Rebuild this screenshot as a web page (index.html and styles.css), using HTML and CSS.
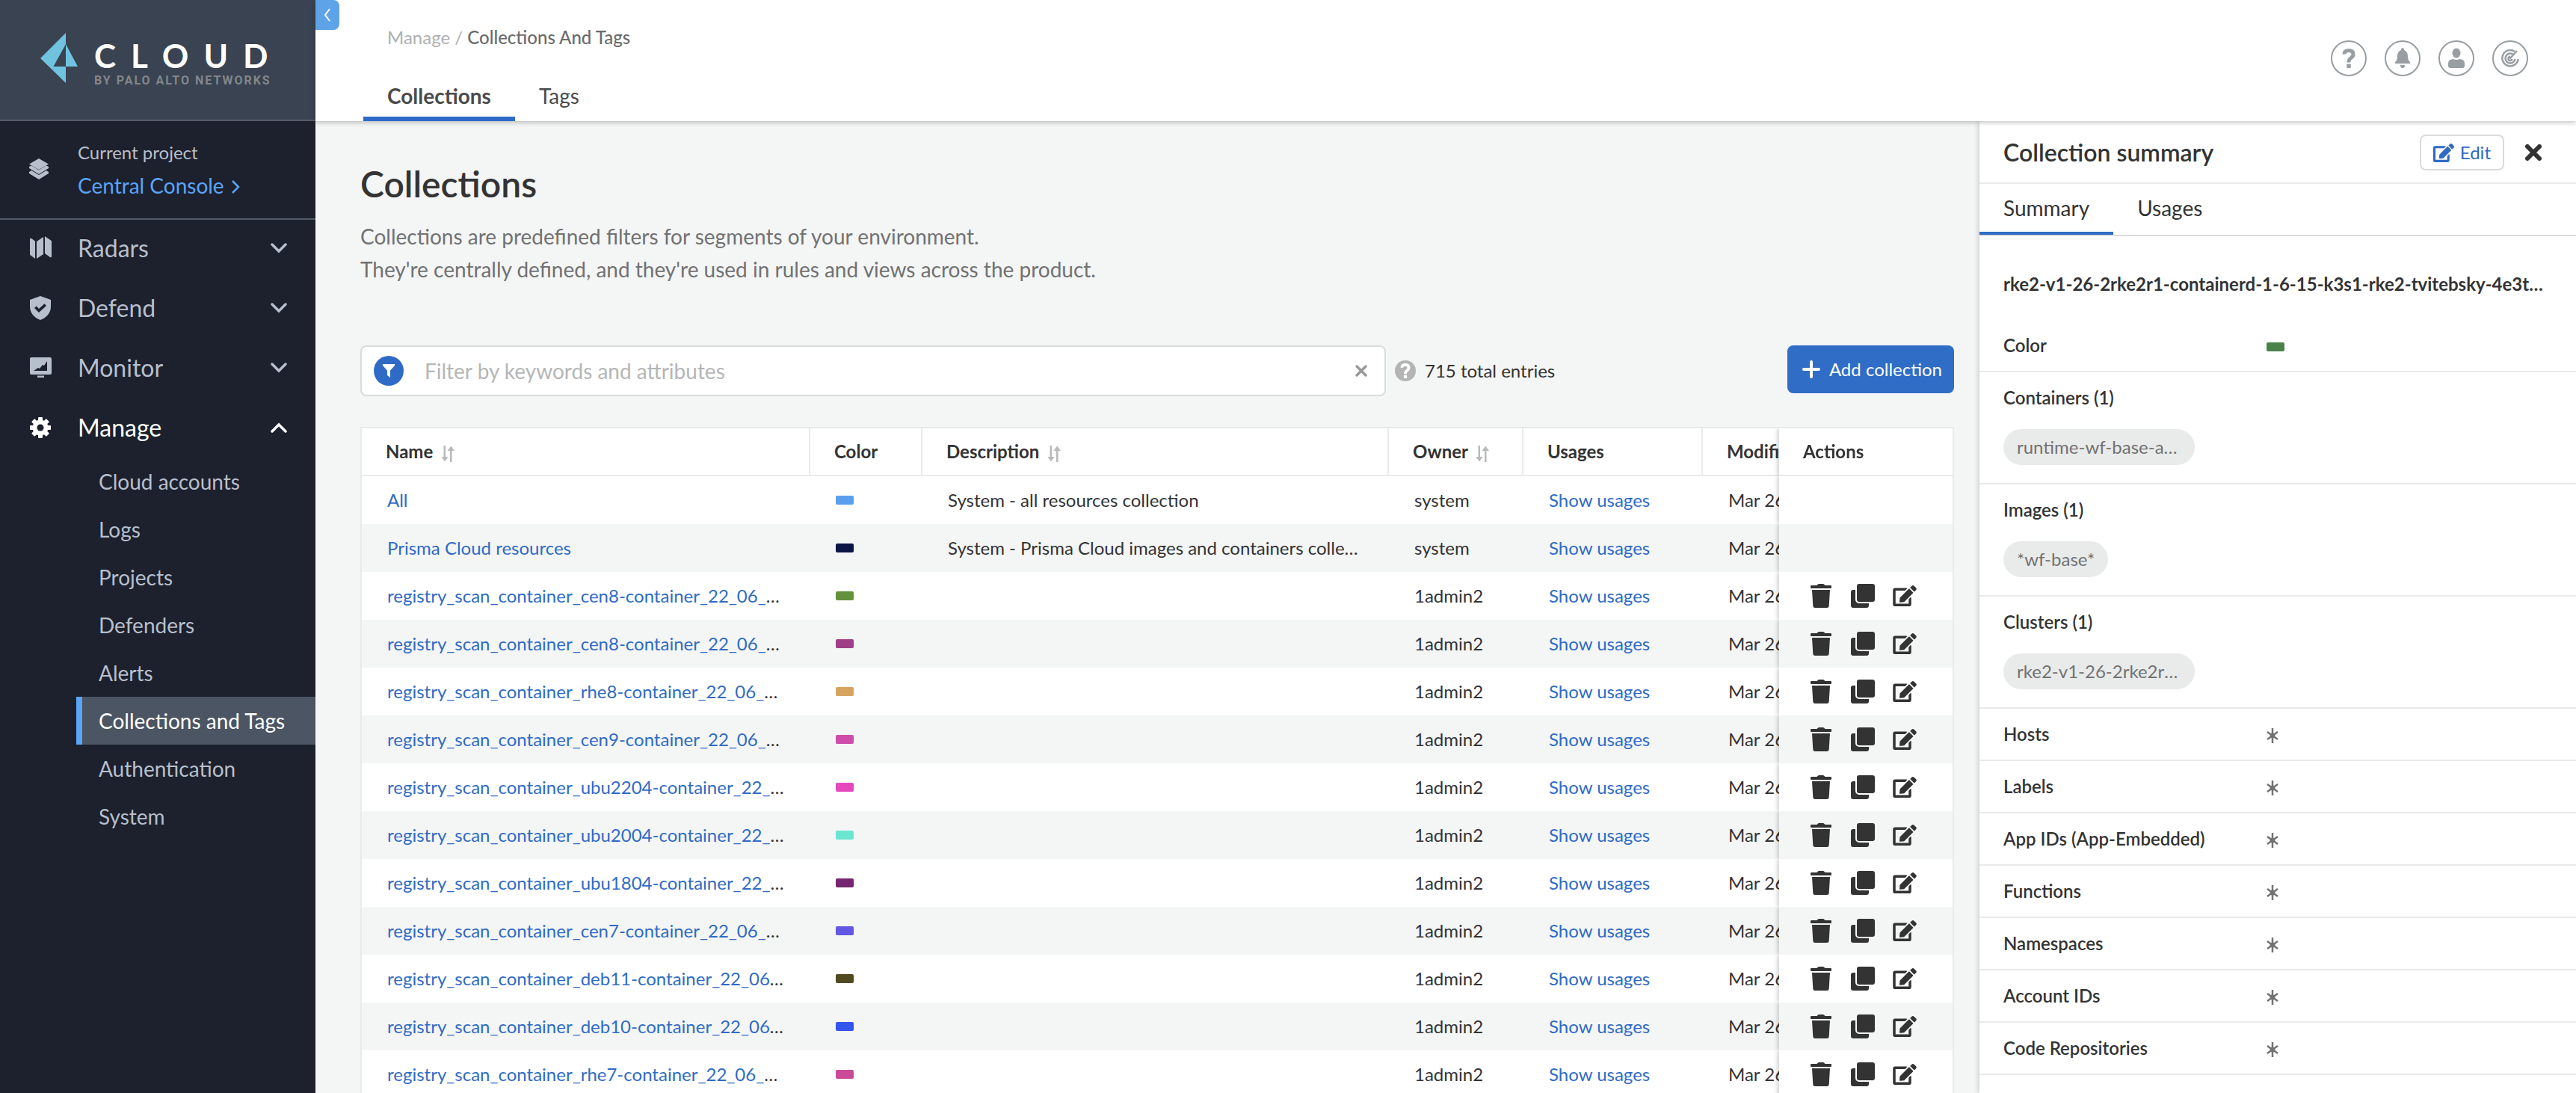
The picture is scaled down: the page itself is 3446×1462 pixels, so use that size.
FILE: index.html
```html
<!DOCTYPE html>
<html lang="en">
<head>
<meta charset="utf-8">
<title>Collections And Tags</title>
<link rel="stylesheet" href="styles.css">
</head>
<body>
<svg class="sprite" aria-hidden="true">
  <symbol id="edit" viewBox="0 0 576 512"><path d="M402.6 83.2l90.2 90.2c3.8 3.8 3.8 10 0 13.8L274.4 405.6l-92.8 10.3c-12.4 1.4-22.9-9.1-21.5-21.5l10.3-92.8L388.8 83.2c3.8-3.8 10-3.8 13.8 0zm162-22.9l-48.8-48.8c-15.2-15.2-39.9-15.2-55.2 0l-35.4 35.4c-3.8 3.8-3.8 10 0 13.8l90.2 90.2c3.8 3.8 10 3.8 13.8 0l35.4-35.4c15.2-15.3 15.2-40 0-55.2zM384 346.2V448H64V128h229.8c3.2 0 6.2-1.3 8.5-3.5l40-40c7.6-7.6 2.2-20.5-8.5-20.5H48C21.5 64 0 85.5 0 112v352c0 26.5 21.5 48 48 48h352c26.5 0 48-21.5 48-48V306.2c0-10.7-12.9-16-20.5-8.5l-40 40c-2.2 2.3-3.5 5.3-3.5 8.5z"/></symbol>
  <symbol id="trash" viewBox="0 0 28 32"><path d="M1 2h7.500l1.500-1.500q.500-.500 1-.500h6q.500 0 1 .500L19.500 2H27q1 0 1 1v2q0 1-1 1H1Q0 6 0 5V3q0-1 1-1zM2 8h24l-1.300 21.500q-.200 2.500-2.700 2.500H6q-2.500 0-2.700-2.500z"/></symbol>
  <symbol id="copy" viewBox="0 0 32 32"><rect x="8" width="24" height="24" rx="3"/><path d="M6 8H3a3 3 0 0 0-3 3v18a3 3 0 0 0 3 3h18a3 3 0 0 0 3-3v-3H11a5 5 0 0 1-5-5z"/></symbol>
  <symbol id="sort" viewBox="0 0 18 22"><path d="M3.500 0h2.500v15h3.500L5 21.500.500 15h3z"/><path d="M12 22h2.500V7h3.500L13.200.500 8.500 7h3.500z"/></symbol>
  <symbol id="chev" viewBox="0 0 22 14"><path d="M2 2l9 9 9-9" fill="none" stroke="currentColor" stroke-width="3.500" stroke-linecap="round"/></symbol>
  <symbol id="question" viewBox="0 0 18 26"><path d="M3 7.500q0-5 6-5t6 5q0 3-3 5t-3 5v1" fill="none" stroke="currentColor" stroke-width="5"/><rect x="6.200" y="20.500" width="5.600" height="5.500" rx="1"/></symbol>
  <symbol id="star" viewBox="0 0 16 20"><path d="M8 0v20M1 5l14 10M15 5L1 15" fill="none" stroke="currentColor" stroke-width="2.500"/><circle cx="8" cy="10" r="3.500"/></symbol>
</svg>
<div class="app">
  <aside class="sidebar">
    <div class="logo">
      <svg width="50" height="68" viewBox="0 0 50 68"><path fill="#6fc3df" d="M34 0V15L17.500 45H34V67L0 34zM34 15l16 30H34z"/></svg>
      <div class="wordmark"><span class="brand">CLOUD</span><span class="byline">BY PALO ALTO NETWORKS</span></div>
    </div>
    <div class="project">
      <svg width="28" height="28" viewBox="0 0 28 28"><path d="M14 0l13 7.500L14 15 1 7.500zM1 11l3-1.500 10 6 10-6 3 1.500v2l-13 8-13-8zM1 18l3-2 10 6 10-6 3 2v2l-13 8-13-8z"/></svg>
      <div class="project-text"><span class="project-label">Current project</span>
        <a href="#">Central Console <svg width="14" height="18" viewBox="0 0 14 18"><path d="M4 1l8 8-8 8" fill="none" stroke="currentColor" stroke-width="2.500"/></svg></a></div>
    </div>
    <nav class="nav">
      <button class="nav-item"><svg width="32" height="32" viewBox="0 0 32 32"><path d="M2 4q0-2 2-1l5 3.500V30L3 25.500Q2 25 2 24zM11 7l9-6v23l-9 6zM22 0l8 5.500q1 .500 1 1.500v20q0 2-2 1l-7-5z"/></svg><span>Radars</span><svg class="chev" width="22" height="14"><use href="#chev"/></svg></button>
      <button class="nav-item"><svg width="32" height="32" viewBox="0 0 32 32"><path fill-rule="evenodd" d="M16 0l14 5v9c0 9-6 15-14 18C8 29 2 23 2 14V5zM8 16l6 6 10-9-2.500-2.800L14 17l-3.200-3.500z"/></svg><span>Defend</span><svg class="chev" width="22" height="14"><use href="#chev"/></svg></button>
      <button class="nav-item"><svg width="32" height="32" viewBox="0 0 32 32"><path fill-rule="evenodd" d="M4 2h25q2 0 2 2v19q0 2-2 2H4q-2 0-2-2V4q0-2 2-2zM7 20h18V7l-4 6-2-1-4 5-2-1zM12 26.500h9v2.500h-9z"/></svg><span>Monitor</span><svg class="chev" width="22" height="14"><use href="#chev"/></svg></button>
      <button class="nav-item open"><svg width="32" height="32" viewBox="-16 -16 32 32"><circle r="10.500"/><g><rect id="tooth" x="-3" y="-14" width="6" height="28" rx="1"/><use href="#tooth" transform="rotate(45)"/><use href="#tooth" transform="rotate(90)"/><use href="#tooth" transform="rotate(135)"/></g><circle class="hole" r="4.500"/></svg><span>Manage</span><svg class="chev" width="22" height="14"><use href="#chev"/></svg></button>
      <ul class="subnav">
        <li><a href="#">Cloud accounts</a></li>
        <li><a href="#">Logs</a></li>
        <li><a href="#">Projects</a></li>
        <li><a href="#">Defenders</a></li>
        <li><a href="#">Alerts</a></li>
        <li><a href="#" class="active">Collections and Tags</a></li>
        <li><a href="#">Authentication</a></li>
        <li><a href="#">System</a></li>
      </ul>
    </nav>
  </aside>
  <div class="main">
    <header class="topbar">
      <button class="collapse" aria-label="Collapse menu"><svg width="12" height="18" viewBox="0 0 12 18"><path d="M9 1L3 9l6 8" fill="none" stroke="currentColor" stroke-width="2"/></svg></button>
      <div class="heading">
        <div class="crumbs">Manage / <b>Collections And Tags</b></div>
        <div class="tabs"><a href="#" class="tab current">Collections</a><a href="#" class="tab">Tags</a></div>
      </div>
      <div class="tools">
        <button aria-label="Help"><svg width="18" height="26"><use href="#question"/></svg></button>
        <button aria-label="Notifications"><svg width="24" height="28" viewBox="0 0 24 28"><path d="M12 0q2 0 2 3 5 2 5 8 0 6 3 8 1 2-1 2H3q-2 0-1-2 3-2 3-8 0-6 5-8 0-3 2-3zM9 23h6q0 4-3 4t-3-4z"/></svg></button>
        <button aria-label="Account"><svg width="24" height="28" viewBox="0 0 24 28"><ellipse cx="12" cy="7" rx="5.500" ry="6.500"/><path d="M1 21q0-6 7-6 4 2 8 0 7 0 7 6v3q0 3-3 3H4q-3 0-3-3z"/></svg></button>
        <button aria-label="Radar"><svg width="24" height="24" viewBox="0 0 24 24"><g fill="none" stroke="currentColor" stroke-width="2.500"><path d="M18 2.800A10.700 10.700 0 1 0 22.700 13"/><path d="M15.500 6.500A6.500 6.500 0 1 0 18.500 13"/><path d="M12 10a2.500 2.500 0 1 0 2.500 3"/><path d="M11.500 12.500L21 2"/></g></svg></button>
      </div>
    </header>
    <div class="body">
      <main class="content">
        <h1>Collections</h1>
        <p class="intro">Collections are predefined filters for segments of your environment.<br>They're centrally defined, and they're used in rules and views across the product.</p>
        <div class="toolbar">
          <div class="search">
            <span class="funnel"><svg width="16" height="18" viewBox="0 0 16 18"><path d="M0 0h16v2l-6 6.500V18l-4-3V8.500L0 2z"/></svg></span>
            <input type="text" aria-label="Filter collections" placeholder="Filter by keywords and attributes">
            <button class="clear" aria-label="Clear"><svg width="18" height="18" viewBox="0 0 18 18"><path d="M3 3l12 12M15 3L3 15" stroke="currentColor" stroke-width="3.500" stroke-linecap="round"/></svg></button>
          </div>
          <span class="info"><svg width="14" height="20"><use href="#question"/></svg></span>
          <span class="count">715 total entries</span>
          <button class="add"><svg width="24" height="24" viewBox="0 0 24 24"><path d="M12 2v20M2 12h20" stroke="currentColor" stroke-width="4" stroke-linecap="round"/></svg>Add collection</button>
        </div>
        <div class="grid">
          <table>
            <colgroup><col class="w-name"><col class="w-color"><col class="w-desc"><col class="w-owner"><col class="w-usages"><col class="w-mod"><col class="w-act"></colgroup>
            <thead><tr><th>Name <svg class="sort"><use href="#sort"/></svg></th><th>Color</th><th>Description <svg class="sort"><use href="#sort"/></svg></th><th>Owner <svg class="sort"><use href="#sort"/></svg></th><th>Usages</th><th>Modified</th><th class="actions">Actions</th></tr></thead>
            <tbody id="rows"></tbody>
          </table>
        </div>
      </main>
      <aside class="panel">
        <div class="panel-head"><h2>Collection summary</h2>
          <button class="edit"><svg width="28" height="25"><use href="#edit"/></svg>Edit</button>
          <button class="close" aria-label="Close"><svg width="22" height="22" viewBox="0 0 22 22"><path d="M3 3l16 16M19 3L3 19" stroke="currentColor" stroke-width="6" stroke-linecap="round"/></svg></button></div>
        <div class="panel-tabs"><a href="#" class="current">Summary</a><a href="#">Usages</a></div>
        <h3>rke2-v1-26-2rke2r1-containerd-1-6-15-k3s1-rke2-tvitebsky-4e3t-collection</h3>
        <div class="row"><span>Color</span><i class="swatch green"></i></div>
        <div class="group"><span>Containers (1)</span><span class="chip">runtime-wf-base-app-container</span></div>
        <div class="group"><span>Images (1)</span><span class="chip">*wf-base*</span></div>
        <div class="group"><span>Clusters (1)</span><span class="chip">rke2-v1-26-2rke2r1-containerd</span></div>
        <div class="row"><span>Hosts</span><svg class="star"><use href="#star"/></svg></div>
        <div class="row"><span>Labels</span><svg class="star"><use href="#star"/></svg></div>
        <div class="row"><span>App IDs (App-Embedded)</span><svg class="star"><use href="#star"/></svg></div>
        <div class="row"><span>Functions</span><svg class="star"><use href="#star"/></svg></div>
        <div class="row"><span>Namespaces</span><svg class="star"><use href="#star"/></svg></div>
        <div class="row"><span>Account IDs</span><svg class="star"><use href="#star"/></svg></div>
        <div class="row"><span>Code Repositories</span><svg class="star"><use href="#star"/></svg></div>
      </aside>
    </div>
  </div>
</div>
<script src="rows.js"></script>
</body>
</html>
```
FILE: rows.js
```js
const rows = [
  ['All', '#5a9fee', 'System - all resources collection', 'system'],
  ['Prisma Cloud resources', '#0a1744', 'System - Prisma Cloud images and containers collection', 'system'],
  ['registry_scan_container_cen8-container_22_06_427', '#64923c', '', '1admin2'],
  ['registry_scan_container_cen8-container_22_06_428', '#a03f87', '', '1admin2'],
  ['registry_scan_container_rhe8-container_22_06_427', '#d5a560', '', '1admin2'],
  ['registry_scan_container_cen9-container_22_06_427', '#cf4daa', '', '1admin2'],
  ['registry_scan_container_ubu2204-container_22_06_427', '#e548bd', '', '1admin2'],
  ['registry_scan_container_ubu2004-container_22_06_427', '#6ae6d0', '', '1admin2'],
  ['registry_scan_container_ubu1804-container_22_06_427', '#762670', '', '1admin2'],
  ['registry_scan_container_cen7-container_22_06_427', '#6157e2', '', '1admin2'],
  ['registry_scan_container_deb11-container_22_06_427', '#51491f', '', '1admin2'],
  ['registry_scan_container_deb10-container_22_06_427', '#3355ee', '', '1admin2'],
  ['registry_scan_container_rhe7-container_22_06_427', '#c94a96', '', '1admin2']
];
const action = (id, label, w, h) =>
  `<button aria-label="${label}"><svg width="${w}" height="${h}"><use href="#${id}"/></svg></button>`;
const actions = '<div class="buttons">' + action('trash', 'Delete', 28, 32) +
  action('copy', 'Clone', 32, 32) + action('edit', 'Edit', 32, 28) + '</div>';
document.getElementById('rows').innerHTML = rows.map(([name, color, desc, owner]) =>
  `<tr><td><a href="#">${name}</a></td><td><i class="swatch" style="background:${color}"></i></td>` +
  `<td>${desc}</td><td>${owner}</td><td><a href="#">Show usages</a></td><td>Mar 26, 2023</td>` +
  `<td class="actions">${owner === 'system' ? '' : actions}</td></tr>`).join('');
```
FILE: styles.css
```css
* { box-sizing: border-box; }
body { margin: 0; font: 24px/32px Lato, "Open Sans", sans-serif; color: #333; }
a { color: #2f6bc6; text-decoration: none; }
button { font: inherit; color: inherit; background: none; border: 0; padding: 0; display: flex; align-items: center; }
h1, h2, h3, p, ul { margin: 0; padding: 0; }
svg { fill: currentColor; flex: none; }
.sprite { display: none; }

.app { display: flex; height: 100vh; overflow: hidden; }
.sidebar { width: 422px; flex: none; background: #1c212d; color: #b8bfcc; }
.logo { display: flex; align-items: center; gap: 22px; height: 162px; padding: 0 0 4px 54px; background: #394351; border-bottom: 2px solid #555c69; }
.wordmark { display: flex; flex-direction: column; padding-top: 16px; }
.brand { font: 700 44px/40px Lato, sans-serif; letter-spacing: 20px; color: #fff; }
.byline { font: 700 16px/20px Roboto, sans-serif; letter-spacing: 2px; color: #84868a; padding-top: 4px; }
.project { display: flex; align-items: center; gap: 38px; height: 130px; padding: 0 0 2px 38px; box-shadow: 0 2px 0 #555c69; }
.project-text { display: flex; flex-direction: column; gap: 8px; line-height: 36px; }
.project-text a { font-size: 28px; color: #5ba4f8; }
.nav-item { width: 100%; height: 80px; padding: 0 38px; font-size: 32px; gap: 34px; }
.nav-item .chev { margin-left: auto; }
.open { color: #fff; }
.open .chev { transform: rotate(180deg); }
.hole { fill: #1c212d; }
.subnav { list-style: none; margin-left: 102px; font-size: 28px; line-height: 64px; }
.subnav a { display: block; padding-left: 22px; border-left: 8px solid transparent; color: inherit; }
.subnav .active { background: #4b5563; border-color: #5ba4f8; color: #fff; }

.main { flex: 1; min-width: 0; display: flex; flex-direction: column; background: #f4f5f5; }
.topbar { display: flex; height: 162px; background: #fff; box-shadow: 0 2px 6px rgba(0, 0, 0, .24); position: relative; z-index: 2; flex: none; }
.collapse { width: 32px; height: 40px; justify-content: center; background: #5ea3e8; color: #fff; border-radius: 0 8px 8px 0; }
.heading { flex: 1; padding: 34px 0 0 32px; display: flex; flex-direction: column; justify-content: space-between; }
.crumbs { padding-left: 32px; color: #aeb0b0; }
.crumbs b { font-weight: 500; color: #6a6b6b; }
.tabs { display: flex; font-size: 28px; line-height: 56px; }
.tab { padding: 0 32px; border-bottom: 6px solid transparent; color: #4a4b4b; }
.tab.current { font-weight: 700; border-color: #2f6bc6; }
.tools { display: flex; gap: 24px; padding: 54px 64px 0 0; color: #989ea1; }
.tools button { width: 48px; height: 48px; justify-content: center; border: 2px solid #989ea1; border-radius: 50%; }
.body { flex: 1; display: flex; min-height: 0; }

.content { flex: 1; min-width: 0; padding: 54px 34px 0 60px; overflow: hidden; }
h1 { font-size: 48px; line-height: 60px; font-weight: 600; }
.intro { margin-top: 18px; font-size: 28px; line-height: 44px; color: #717272; }
.toolbar { display: flex; align-items: center; margin: 80px 0 41px; }
.search { flex: 1; max-width: 1372px; height: 68px; display: flex; align-items: center; padding: 0 22px 0 16px; gap: 28px; background: #fff; border: 2px solid #dadbdb; border-radius: 8px; }
.funnel { width: 40px; height: 40px; border-radius: 50%; background: #2f6bc6; color: #fff; display: flex; align-items: center; justify-content: center; }
.search input { flex: 1; border: 0; padding: 0; font: 28px/40px Lato, sans-serif; background: none; }
.search input::placeholder { color: #b5b6b6; opacity: 1; }
.clear { color: #999; }
.info { width: 28px; height: 28px; margin: 0 12px; border-radius: 50%; background: #b4b4b4; color: #fff; display: flex; align-items: center; justify-content: center; }
.add { align-self: flex-start; height: 64px; margin-left: auto; padding: 0 16px 0 20px; gap: 12px; background: #2f6dc6; color: #fff; border-radius: 8px; }

.grid { border: 2px solid #e9eaea; overflow-x: auto; scrollbar-width: none; background: #fff; }
table { table-layout: fixed; width: 2326px; border-collapse: separate; border-spacing: 0; }
.w-name { width: 600px; }
.w-color { width: 150px; }
.w-desc { width: 624px; }
.w-owner { width: 180px; }
.w-usages { width: 240px; }
.w-mod { width: 300px; }
.w-act { width: 232px; }
th, td { height: 64px; padding: 0 34px; text-align: left; white-space: nowrap; overflow: hidden; text-overflow: ellipsis; background: #fff; }
th { padding: 0 0 0 32px; font-weight: 700; border-right: 2px solid #e9eaea; border-bottom: 2px solid #e9eaea; }
tr:nth-child(even) td { background: #f4f5f5; }
.sort { width: 18px; height: 22px; margin-left: 5px; color: #b8b9b9; vertical-align: -5px; }
.actions { position: sticky; right: 0; overflow: visible; border-right: 0; box-shadow: -2px 0 6px rgba(0, 0, 0, .2); clip-path: inset(0 0 0 -12px); }
td.actions { padding: 0 40px; }
.buttons { display: flex; gap: 24px; }
.buttons button { width: 32px; height: 32px; justify-content: center; }
.swatch { display: block; width: 24px; height: 12px; border-radius: 2px; }

.panel { width: 798px; flex: none; background: #fff; box-shadow: -2px 0 6px rgba(0, 0, 0, .16); }
.panel-head { display: flex; align-items: center; height: 84px; padding: 2px 46px 0 32px; border-bottom: 2px solid #e9eaea; }
h2 { font-size: 32px; font-weight: 600; margin-right: auto; }
.edit { height: 48px; padding: 0 16px; gap: 8px; border: 2px solid #dadbdb; border-radius: 8px; color: #2f6bc6; }
.close { margin-left: 28px; }
.panel-tabs { display: flex; font-size: 28px; line-height: 64px; border-bottom: 2px solid #dadbdb; }
.panel-tabs a { padding: 0 32px; color: #333; border-bottom: 4px solid transparent; }
.panel-tabs .current { border-color: #2f6bc6; }
h3 { font-size: 24px; line-height: 32px; padding: 48px 32px 32px; margin-right: 8px; overflow: hidden; white-space: nowrap; text-overflow: ellipsis; }
.row { display: flex; align-items: center; height: 70px; padding: 0 32px; border-bottom: 2px solid #e9eaea; font-weight: 600; }
.row span { width: 352px; }
.row .swatch, .row .star { margin-top: 4px; }
.green { background: #4a824a; }
.star { width: 16px; height: 20px; color: #717272; }
.group { padding: 18px 32px 24px; border-bottom: 2px solid #e9eaea; display: flex; flex-direction: column; align-items: flex-start; gap: 26px; font-weight: 600; }
.chip { max-width: 256px; padding: 0 18px; font-weight: 400; line-height: 48px; border-radius: 24px; background: #e9eaea; color: #717272; overflow: hidden; white-space: nowrap; text-overflow: ellipsis; }
```
